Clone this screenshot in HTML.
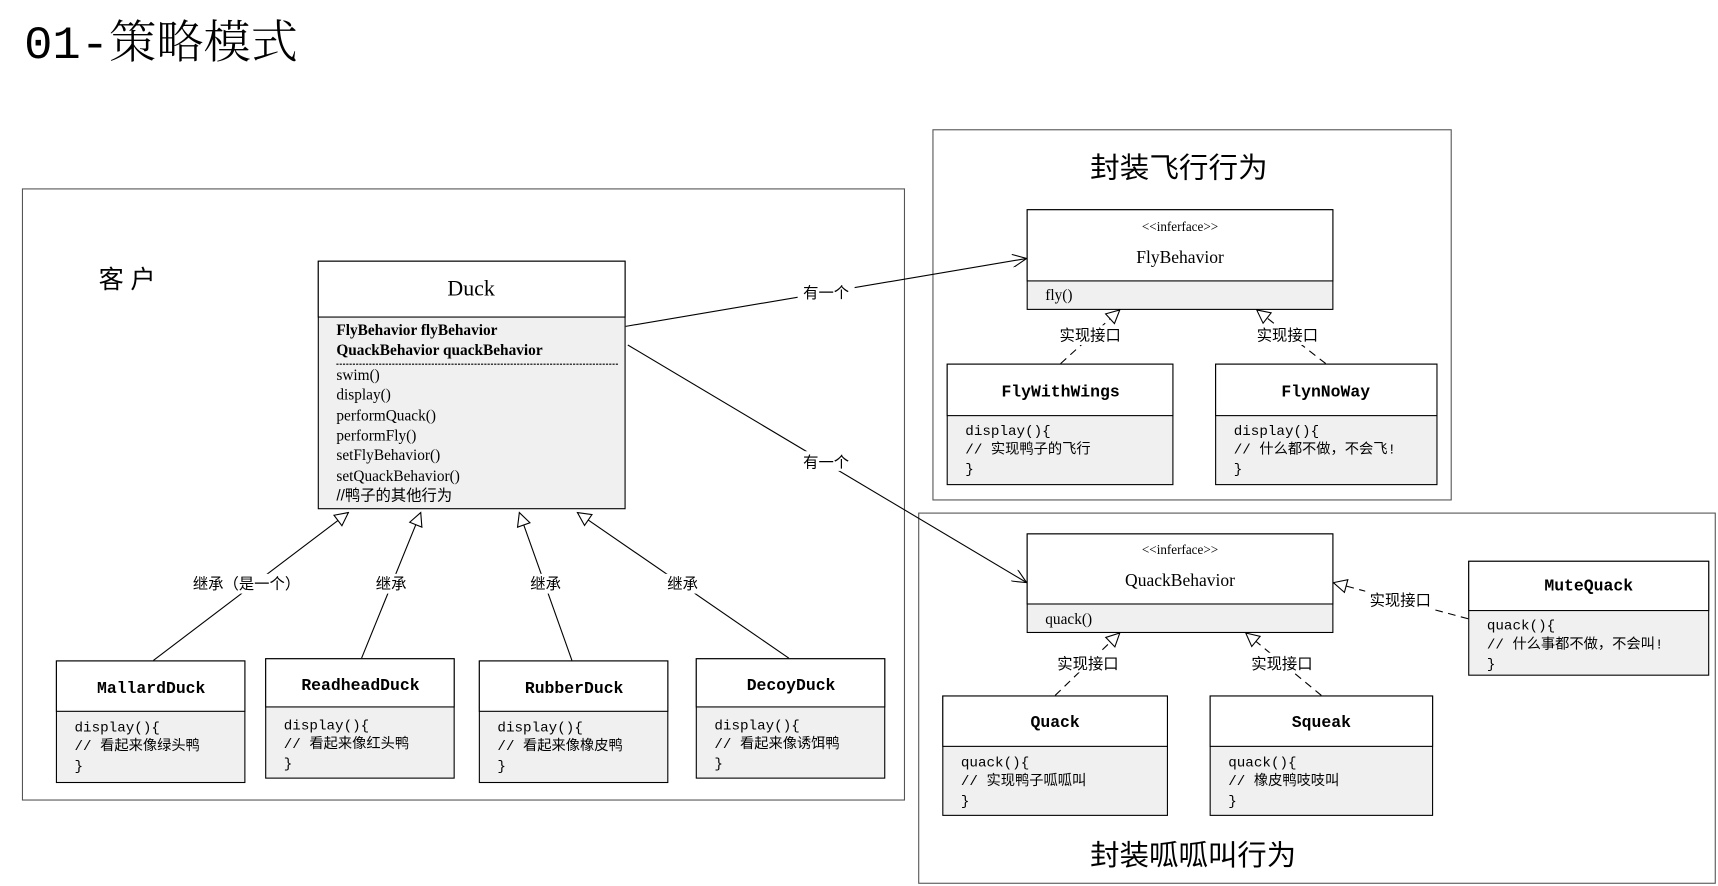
<!DOCTYPE html>
<html><head><meta charset="utf-8"><style>
html,body{margin:0;padding:0;background:#fff;width:1718px;height:886px;overflow:hidden}
svg{display:block}
.s{font-family:"Liberation Serif","Noto Serif CJK SC",serif}
.m{font-family:"Liberation Mono","Noto Sans CJK SC",monospace}
.c{font-family:"Liberation Sans","Noto Sans CJK SC",sans-serif}
</style></head><body>
<svg width="1718" height="886" viewBox="0 0 1568 809" preserveAspectRatio="none" xmlns="http://www.w3.org/2000/svg">
<defs>
<marker id="open" markerWidth="14" markerHeight="12" refX="13" refY="6" orient="auto" markerUnits="userSpaceOnUse"><path d="M0,0 L13,6 L0,12" fill="none" stroke="#000"/></marker>
<marker id="tri" markerWidth="14" markerHeight="14" refX="13" refY="7" orient="auto" markerUnits="userSpaceOnUse"><path d="M1,1 L13,7 L1,13 Z" fill="#fff" stroke="#000"/></marker>
</defs>
<text x="22" y="53" font-family="'Liberation Mono','Noto Serif CJK SC',serif" font-size="42" font-weight="300" textLength="250" lengthAdjust="spacingAndGlyphs">01-策略模式</text>
<g fill="none" stroke="#555" stroke-width="1">
<rect x="20.5" y="172.5" width="805" height="558"/>
<rect x="851.5" y="118.5" width="473" height="338"/>
<rect x="838.5" y="468.5" width="727" height="338"/>
</g>
<text x="90" y="263" class="c" font-size="23" textLength="52">客户</text>
<text x="995" y="162" class="c" font-size="26" textLength="162" lengthAdjust="spacingAndGlyphs">封装飞行行为</text>
<text x="995" y="790" class="c" font-size="26" textLength="188" lengthAdjust="spacingAndGlyphs">封装呱呱叫行为</text>

<g stroke="#000" stroke-width="1" fill="none">
<line x1="571" y1="298" x2="937" y2="236" marker-end="url(#open)"/>
<line x1="573" y1="315" x2="937" y2="532" marker-end="url(#open)"/>
<line x1="140" y1="603" x2="318" y2="468" marker-end="url(#tri)"/>
<line x1="330" y1="601" x2="384" y2="468" marker-end="url(#tri)"/>
<line x1="522" y1="603" x2="474" y2="468" marker-end="url(#tri)"/>
<line x1="720" y1="601" x2="527" y2="468" marker-end="url(#tri)"/>
<g stroke-dasharray="7,5">
<line x1="968" y1="332" x2="1022" y2="283" marker-end="url(#tri)"/>
<line x1="1210" y1="332" x2="1147" y2="283" marker-end="url(#tri)"/>
<line x1="963" y1="635" x2="1022" y2="578" marker-end="url(#tri)"/>
<line x1="1206" y1="635" x2="1137" y2="578" marker-end="url(#tri)"/>
<line x1="1340" y1="565" x2="1217" y2="532" marker-end="url(#tri)"/>
</g>
</g>
<g class="c" font-size="14" text-anchor="middle">
<rect x="728" y="258" width="52" height="18" fill="#fff"/><text x="754" y="272">有一个</text>
<rect x="728" y="412" width="52" height="18" fill="#fff"/><text x="754" y="427">有一个</text>
<rect x="165" y="524" width="112" height="18" fill="#fff"/><text x="225" y="538">继承（是一个）</text>
<rect x="340" y="524" width="34" height="18" fill="#fff"/><text x="357" y="538">继承</text>
<rect x="481" y="524" width="34" height="18" fill="#fff"/><text x="498" y="538">继承</text>
<rect x="606" y="524" width="34" height="18" fill="#fff"/><text x="623" y="538">继承</text>
<rect x="963" y="297" width="64" height="18" fill="#fff"/><text x="995" y="311">实现接口</text>
<rect x="1143" y="297" width="64" height="18" fill="#fff"/><text x="1175" y="311">实现接口</text>
<rect x="961" y="596" width="64" height="18" fill="#fff"/><text x="993" y="611">实现接口</text>
<rect x="1138" y="596" width="64" height="18" fill="#fff"/><text x="1170" y="611">实现接口</text>
<rect x="1246" y="539" width="64" height="18" fill="#fff"/><text x="1278" y="553">实现接口</text>
</g>

<g stroke="#000" stroke-width="1">
<rect x="290.5" y="238.5" width="280" height="226" fill="#f0f0f0"/>
<rect x="290.5" y="238.5" width="280" height="51" fill="#fff"/>
<line x1="307" y1="332.5" x2="565" y2="332.5" stroke-dasharray="2,1"/>
</g>
<text x="430" y="270" class="s" font-size="20" text-anchor="middle">Duck</text>
<g class="s" font-size="14">
<text x="307" y="306" font-weight="bold">FlyBehavior flyBehavior</text>
<text x="307" y="324" font-weight="bold">QuackBehavior quackBehavior</text>
<text x="307" y="347">swim()</text>
<text x="307" y="365">display()</text>
<text x="307" y="384">performQuack()</text>
<text x="307" y="402">performFly()</text>
<text x="307" y="420">setFlyBehavior()</text>
<text x="307" y="439">setQuackBehavior()</text>
<text x="307" y="457" class="c">//鸭子的其他行为</text>
</g>

<g stroke="#000" stroke-width="1">
<rect x="937.5" y="191.5" width="279" height="91" fill="#f0f0f0"/>
<rect x="937.5" y="191.5" width="279" height="65" fill="#fff"/>
<rect x="937.5" y="487.5" width="279" height="90" fill="#f0f0f0"/>
<rect x="937.5" y="487.5" width="279" height="64" fill="#fff"/>
</g>
<g class="s" text-anchor="middle">
<text x="1077" y="211" font-size="12">&lt;&lt;inferface&gt;&gt;</text>
<text x="1077" y="240" font-size="16">FlyBehavior</text>
<text x="1077" y="506" font-size="12">&lt;&lt;inferface&gt;&gt;</text>
<text x="1077" y="535" font-size="16">QuackBehavior</text>
</g>
<text x="954" y="274" class="s" font-size="14">fly()</text>
<text x="954" y="570" class="s" font-size="14">quack()</text>

<g stroke="#000" stroke-width="1">
<rect x="864.5" y="332.5" width="206" height="110" fill="#f0f0f0"/><rect x="864.5" y="332.5" width="206" height="47" fill="#fff"/>
<rect x="1109.5" y="332.5" width="202" height="110" fill="#f0f0f0"/><rect x="1109.5" y="332.5" width="202" height="47" fill="#fff"/>
<rect x="1340.5" y="512.5" width="219" height="104" fill="#f0f0f0"/><rect x="1340.5" y="512.5" width="219" height="45" fill="#fff"/>
<rect x="860.5" y="635.5" width="205" height="109" fill="#f0f0f0"/><rect x="860.5" y="635.5" width="205" height="46" fill="#fff"/>
<rect x="1104.5" y="635.5" width="203" height="109" fill="#f0f0f0"/><rect x="1104.5" y="635.5" width="203" height="46" fill="#fff"/>
<rect x="51.5" y="603.5" width="172" height="111" fill="#f0f0f0"/><rect x="51.5" y="603.5" width="172" height="46" fill="#fff"/>
<rect x="242.5" y="601.5" width="172" height="109" fill="#f0f0f0"/><rect x="242.5" y="601.5" width="172" height="44" fill="#fff"/>
<rect x="437.5" y="603.5" width="172" height="111" fill="#f0f0f0"/><rect x="437.5" y="603.5" width="172" height="46" fill="#fff"/>
<rect x="635.5" y="601.5" width="172" height="109" fill="#f0f0f0"/><rect x="635.5" y="601.5" width="172" height="44" fill="#fff"/>
</g>
<g class="m" font-size="15" font-weight="bold" text-anchor="middle">
<text x="968" y="362">FlyWithWings</text>
<text x="1210" y="362">FlynNoWay</text>
<text x="1450" y="539">MuteQuack</text>
<text x="963" y="664">Quack</text>
<text x="1206" y="664">Squeak</text>
<text x="138" y="633">MallardDuck</text>
<text x="329" y="630">ReadheadDuck</text>
<text x="524" y="633">RubberDuck</text>
<text x="722" y="630">DecoyDuck</text>
</g>
<g class="m" font-size="13">
<text x="881" y="397">display(){</text><text x="881" y="414">// 实现鸭子的飞行</text><text x="881" y="432">}</text>
<text x="1126" y="397">display(){</text><text x="1126" y="414">// 什么都不做，不会飞!</text><text x="1126" y="432">}</text>
<text x="1357" y="575">quack(){</text><text x="1357" y="592">// 什么事都不做，不会叫!</text><text x="1357" y="610">}</text>
<text x="877" y="700">quack(){</text><text x="877" y="717">// 实现鸭子呱呱叫</text><text x="877" y="735">}</text>
<text x="1121" y="700">quack(){</text><text x="1121" y="717">// 橡皮鸭吱吱叫</text><text x="1121" y="735">}</text>
<text x="68" y="668">display(){</text><text x="68" y="685">// 看起来像绿头鸭</text><text x="68" y="703">}</text>
<text x="259" y="666">display(){</text><text x="259" y="683">// 看起来像红头鸭</text><text x="259" y="701">}</text>
<text x="454" y="668">display(){</text><text x="454" y="685">// 看起来像橡皮鸭</text><text x="454" y="703">}</text>
<text x="652" y="666">display(){</text><text x="652" y="683">// 看起来像诱饵鸭</text><text x="652" y="701">}</text>
</g>
</svg>
</body></html>
